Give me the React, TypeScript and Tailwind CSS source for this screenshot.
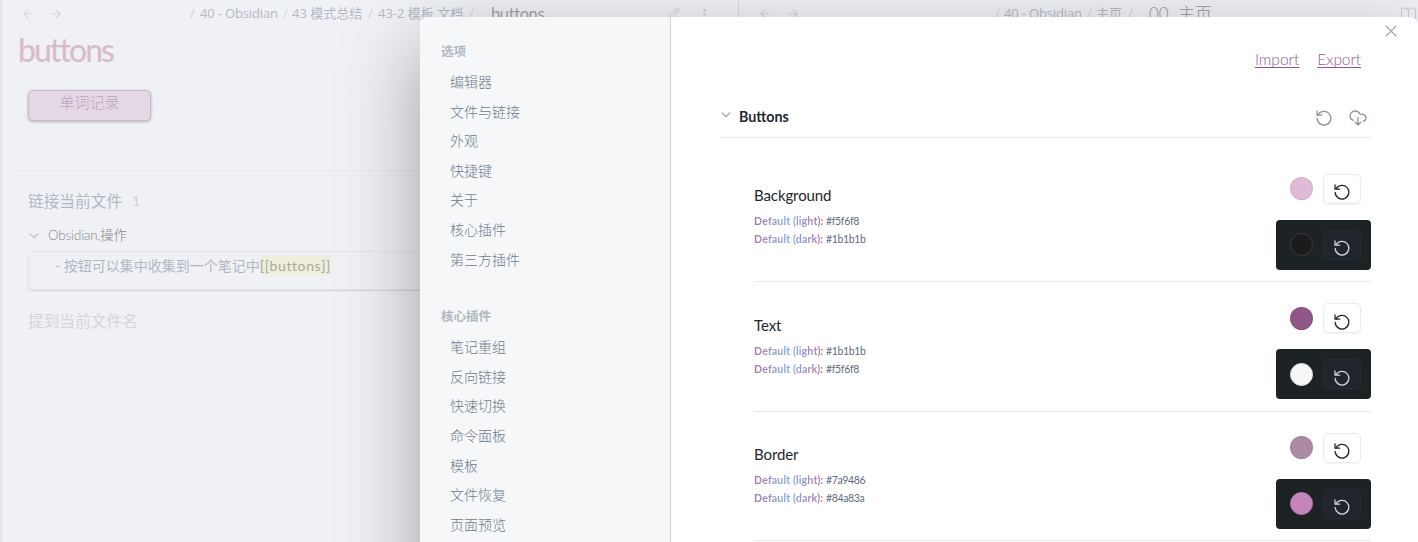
import React from "react";
import { ArrowLeft, ArrowRight, BookOpen, EllipsisVertical, Pencil } from "lucide-react";

const optionItems = ["编辑器", "文件与链接", "外观", "快捷键", "关于", "核心插件", "第三方插件"];
const coreItems = ["笔记重组", "反向链接", "快速切换", "命令面板", "模板", "文件恢复", "页面预览"];

const settings = [
  { name: "Background", light: "#f5f6f8", dark: "#1b1b1b", lightDot: "bg-[#dfbbd7]", darkDot: "bg-[#1b1b1b] border-[#3a3a3c]" },
  { name: "Text", light: "#1b1b1b", dark: "#f5f6f8", lightDot: "bg-[#8f5787]", darkDot: "bg-[#f5f6f8] border-[#dcdddf]" },
  { name: "Border", light: "#7a9486", dark: "#84a83a", lightDot: "bg-[#ad8ba6]", darkDot: "bg-[#c485bb] border-[#b27aab]" },
];

function ResetIcon({ className }: { className: string }) {
  return (
    <svg viewBox="0 0 16 16" fill="none" stroke="currentColor" strokeWidth="1.3" strokeLinecap="round" strokeLinejoin="round" className={className}>
      <path d="M1 .9v4.300h4.700" />
      <path d="M2 5A6.800 6.800 0 1 1 1.200 8.400" />
    </svg>
  );
}

function CloudIcon() {
  return (
    <svg viewBox="0 0 18 16" fill="none" stroke="currentColor" strokeWidth="1.3" strokeLinecap="round" strokeLinejoin="round" className="h-4 w-[18px]">
      <path d="M4.200 10.300C2.200 9.800 1 8.300 1 6.300 1 3.400 3.300 1 6.200 1c2.300 0 4.100 1.300 4.900 3.300 3.300-.5 5.900.8 5.900 3.600 0 1.700-1 2.900-2.700 3.300" />
      <path d="M9 7.500v7.200M6.200 12.300 9 15l2.800-2.700" />
    </svg>
  );
}

function Chevron({ className }: { className: string }) {
  return (
    <svg viewBox="0 0 12 12" fill="none" stroke="currentColor" strokeWidth="1.4" strokeLinecap="round" strokeLinejoin="round" className={className}>
      <path d="M2.200 4 6 7.800 9.800 4" />
    </svg>
  );
}

function NavGroup({ title, items }: { title: string; items: string[] }) {
  return (
    <div>
      <div className="h-[30px] text-[12.5px] font-bold leading-[30px] text-[#b0b7c1]">{title}</div>
      {items.map((item) => (
        <div key={item} className="h-[29.6px] pl-[9px] text-[14px] font-light leading-[29.6px] text-[#6f7b8d]">{item}</div>
      ))}
    </div>
  );
}

function DefaultValue({ label, value }: { label: string; value: string }) {
  return (
    <div className="flex h-[18px] items-center whitespace-nowrap text-[10.7px] leading-[18px]">
      <span className="w-[69px] shrink-0 bg-gradient-to-r from-[#ac789f] via-[#7fa6f2] to-[#ac789f] bg-clip-text font-bold tracking-[0.1px] text-transparent">
        {label}
      </span>
      <span className="ml-[3px] text-[10.5px] tracking-[-0.35px] text-[#5f6b7c]">{value}</span>
    </div>
  );
}

export default function App() {
  return (
    <div className="relative h-[542px] w-full overflow-hidden bg-[#f0f1f5] font-['Lato','Noto_Sans_CJK_SC',sans-serif]">
      <div className="flex h-full border-l border-[#e6e8ec]">
        <div className="w-[738px] shrink-0 border-x border-[#dcdee3]">
          <div className="flex h-7 items-center pl-[19px] text-[14px] text-[#b4bac4]">
            <ArrowLeft size={14} strokeWidth={2} className="shrink-0 text-[#d3d7dd]" />
            <ArrowRight size={14} strokeWidth={2} className="ml-[14px] shrink-0 text-[#d3d7dd]" />
            <div className="ml-[127px] flex whitespace-nowrap font-['Open_Sans','Noto_Sans_CJK_SC',sans-serif] text-[13px]">
              <span className="w-[10px] text-[#cfd3d9]">/</span>
              <span className="w-[83px] tracking-[-0.15px]">40 - Obsidian</span>
              <span className="w-[9px] text-[#cfd3d9]">/</span>
              <span className="w-[76px]">43 模式总结</span>
              <span className="w-[10px] text-[#cfd3d9]">/</span>
              <span className="w-[91px]">43-2 模板,文档</span>
              <span className="w-[22px] text-[#cfd3d9]">/</span>
            </div>
            <span className="w-[175px] text-[16.5px] tracking-[-0.4px] text-[#a0a4ab]">buttons</span>
            <Pencil size={14} strokeWidth={1.5} className="shrink-0 text-[#c6cad1]" />
            <EllipsisVertical size={15} strokeWidth={2} className="ml-[17px] shrink-0 text-[#c6cad1]" />
          </div>
          <h1 className="ml-[16px] h-[62px] text-[32px] font-medium leading-[43px] tracking-[-2px] text-[#d9bbca]">buttons</h1>
          <div className="ml-[26px] h-[31px] w-[123px] rounded-[5px] border border-[#cdb9cc] bg-[#e4d8e5] text-center text-[15px] font-light leading-[22px] text-[#bfa4bf] shadow-[0_1px_3px_rgba(60,60,70,0.35)]">
            单词记录
          </div>
          <div className="ml-[16px] mt-[49px] border-t border-[#e6e8ec]" />
          <div className="ml-[26px] mt-[16px] flex h-[30px] items-center gap-[10px] text-[15.7px] text-[#b2b8c3]">
            <span>链接当前文件</span>
            <span className="text-[13px] text-[#cdd1d7]">1</span>
          </div>
          <div className="ml-[26px] mt-[7px] flex h-[24px] items-center text-[13.3px] font-light tracking-[-0.1px] text-[#85888f]">
            <Chevron className="mr-[8px] size-3 text-[#c2c6cd]" />
            Obsidian,操作
          </div>
          <div className="ml-[26px] mt-[3px] h-[39px] whitespace-pre rounded-[4px] border border-[#e3e5e9] pl-[26px] text-[14px] leading-[28px] text-[#b0b7c3] shadow-[0_1px_1px_#d2d5dc]">
            - 按钮可以集中收集到一个笔记中<span className="bg-[#efeedb] py-px tracking-[0.6px] text-[#a9a9a5]">[[buttons]]</span>
          </div>
          <div className="ml-[26px] mt-[16px] text-[15.7px] leading-[30px] text-[#d3d6dc]">提到当前文件名</div>
        </div>
        <div className="flex-1">
          <div className="flex h-7 items-center pl-[19px] text-[13px] text-[#b4bac4]">
            <ArrowLeft size={14} strokeWidth={2} className="shrink-0 text-[#cfd3d9]" />
            <ArrowRight size={14} strokeWidth={2} className="ml-[14px] shrink-0 text-[#cfd3d9]" />
            <div className="ml-[195px] flex whitespace-nowrap font-['Open_Sans','Noto_Sans_CJK_SC',sans-serif] text-[13px]">
              <span className="w-[9px] text-[#cfd3d9]">/</span>
              <span className="w-[83px] tracking-[-0.15px]">40 - Obsidian</span>
              <span className="w-[9px] text-[#cfd3d9]">/</span>
              <span className="w-[32px]">主页</span>
              <span className="w-[21px] text-[#cfd3d9]">/</span>
            </div>
            <span className="whitespace-pre text-[17px] font-light text-[#92969d]">00  主页</span>
            <BookOpen size={17} strokeWidth={1.3} className="ml-auto mr-[1px] shrink-0 text-[#c3c7ce]" />
          </div>
        </div>
      </div>

      <div className="absolute left-[420px] top-[17px] flex h-[600px] w-[998px] rounded-[8px] bg-white shadow-[0_30px_80px_rgba(0,0,0,0.35)]">
        <nav className="w-[251px] shrink-0 rounded-l-[8px] border-r border-[#cfd1d4] bg-[#f5f7f9] pl-[21px] pt-[20px]">
          <NavGroup title="选项" items={optionItems} />
          <div className="h-[28px]" />
          <NavGroup title="核心插件" items={coreItems} />
        </nav>
        <main className="flex-1 pl-[49px] pr-[47px]">
          <div className="-mr-[26px] flex h-[28px] items-center justify-end">
            <svg viewBox="0 0 12 12" stroke="currentColor" strokeWidth="1.2" strokeLinecap="round" className="size-3 text-[#a4aab5]">
              <path d="M1 1l10 10M11 1 1 11" />
            </svg>
          </div>
          <div className="flex h-[30px] items-center justify-end gap-[18px] pr-[10px] text-[15.5px] font-light text-[#8f5787] underline decoration-1 underline-offset-2">
            <a>Import</a>
            <a className="tracking-[-0.1px]">Export</a>
          </div>
          <div className="mt-[22px] flex h-[41px] items-center border-b border-[#e8e9eb]">
            <Chevron className="-mt-[4px] size-3 text-[#a7aeb8]" />
            <span className="ml-[7px] flex-1 text-[14.3px] font-bold text-[#23282e]">Buttons</span>
            <span className="flex items-center gap-[17px] pr-[4px] pt-px text-[#8a94a3]">
              <ResetIcon className="size-4" />
              <CloudIcon />
            </span>
          </div>
          <div className="ml-[34px] pt-[14.5px]">
            {settings.map((setting) => (
              <div key={setting.name} className="flex h-[129.5px] justify-between border-b border-[#e8e9eb] pt-[21px]">
                <div className="pt-[9.5px]">
                  <div className="h-[29px] text-[15px] leading-[24px] tracking-[-0.1px] text-[#22272e]">{setting.name}</div>
                  <DefaultValue label="Default (light):" value={setting.light} />
                  <DefaultValue label="Default (dark):" value={setting.dark} />
                </div>
                <div className="w-[95px]">
                  <div className="flex h-[30px] items-center justify-end gap-[10px] pr-[10px]">
                    <div className={`size-[23px] rounded-full border border-black/5 ${setting.lightDot}`} />
                    <div className="flex h-[30px] w-[38px] items-center justify-center rounded-[5px] border border-[#e9ebee] pt-[7px] text-[#22272e] shadow-[0_1px_2px_rgba(0,0,0,0.05)]">
                      <ResetIcon className="size-4" />
                    </div>
                  </div>
                  <div className="mt-[16px] flex h-[50px] items-center justify-end gap-[10px] rounded-[4px] bg-[#1d2225] pr-[10px]">
                    <div className={`size-[23px] rounded-full border ${setting.darkDot}`} />
                    <div className="flex h-[30px] w-[38px] items-center justify-center rounded-[5px] border border-[#272b34] bg-[#20242d] pt-[7px] text-[#cfd3db]">
                      <ResetIcon className="size-4" />
                    </div>
                  </div>
                </div>
              </div>
            ))}
          </div>
        </main>
      </div>
    </div>
  );
}
